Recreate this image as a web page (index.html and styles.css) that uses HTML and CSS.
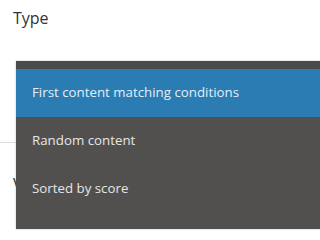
FILE: index.html
```html
<!DOCTYPE html>
<html>
<head>
<meta charset="utf-8">
<link rel="stylesheet" href="styles.css">
</head>
<body>
<div class="form">
  <div class="label">Type</div>
  <div class="field"></div>
  <div class="label second">Value</div>
</div>
<ul class="menu">
  <li class="item active">First content matching conditions</li>
  <li class="item">Random content</li>
  <li class="item">Sorted by score</li>
</ul>
</body>
</html>
```
FILE: styles.css
```css
html, body {
  margin: 0;
  padding: 0;
  background: #ffffff;
  font-family: "Open Sans", "Noto Sans", sans-serif;
  overflow: hidden;
}
.form {
  padding: 7px 0 0 0;
}
.label {
  padding-left: 13px;
  font-size: 16px;
  line-height: 22px;
  color: #333333;
}
.field {
  height: 113px;
  border-bottom: 1px solid #dddddd;
}
.label.second {
  margin-top: 30px;
}
.menu {
  position: absolute;
  left: 16px;
  top: 61px;
  right: 0;
  margin: 0;
  padding: 0 0 16px 0;
  list-style: none;
  background: #52504f;
  border-top: 8px solid #4a4a4a;
  box-shadow: 0 0 2px rgba(0,0,0,0.25);
}
.item {
  height: 48px;
  line-height: 47px;
  padding-left: 16px;
  font-size: 13.3px;
  color: #e6e6e6;
}
.item.active {
  background: #2a7cb3;
  color: #e3eef7;
}
```
